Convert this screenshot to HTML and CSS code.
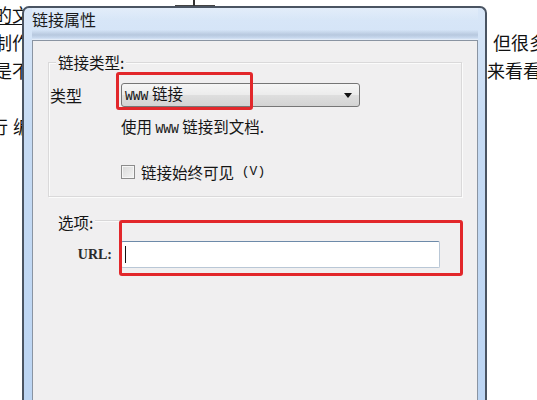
FILE: index.html
```html
<!DOCTYPE html>
<html lang="zh-CN">
<head>
<meta charset="utf-8">
<title>链接属性</title>
<link rel="stylesheet" href="styles.css">
</head>
<body>
<div class="doc">
  <div class="line"><span class="l u">的文</span></div>
  <div class="line"><span class="l">制作</span><span class="r r1">但很多</span></div>
  <div class="line"><span class="l">是不</span><span class="r r2">起来看看</span></div>
  <div class="line"></div>
  <div class="line"><span class="l5"><span class="gap">行</span>编</span></div>
</div>
<span class="caret-mark"></span>

<div class="dialog">
  <div class="titlebar"><span class="title">链接属性</span></div>
  <div class="client">
    <div class="group">
      <div class="legend">链接类型:</div>
      <div class="type-row">
        <span class="lbl">类型</span>
        <div class="select">
          <span class="sel-text"><span class="lat">WWW</span> 链接</span>
          <svg class="arrow" width="8" height="5" viewBox="0 0 8 5"><path d="M0 0H8L4 5Z" fill="#111"/></svg>
        </div>
      </div>
      <div class="desc">使用 <span class="lat">WWW</span> 链接到文档.</div>
      <div class="check"><span class="box"></span>链接始终可见<span class="lat"> (V)</span></div>
    </div>
    <div class="section"><span class="section-lbl">选项:</span><span class="rule"></span></div>
    <div class="url-row">
      <span class="url-lbl">URL:</span>
      <div class="input"><span class="cursor"></span></div>
    </div>
    <div class="mark mark1"></div>
    <div class="mark mark2"></div>
  </div>
</div>
</body>
</html>
```
FILE: styles.css
```css
html, body {
  margin: 0;
  padding: 0;
}
body {
  width: 537px;
  height: 400px;
  overflow: hidden;
  position: relative;
  background: #ffffff;
  font-family: "Noto Sans CJK SC", "Noto Sans", sans-serif;
  color: #141414;
}

/* background document */
.doc {
  font-size: 18px;
  line-height: 28px;
  color: #121212;
}
.line {
  display: flex;
  height: 28px;
  white-space: nowrap;
}
.l { margin-left: -6px; }
.l5 { margin-left: -10px; }
.gap { margin-right: 5px; }
.u { text-decoration: underline; text-underline-offset: 2px; }
.r { margin-left: auto; }
.r1 { margin-right: -10px; }
.r2 { margin-right: -4px; }

.caret-mark {
  position: absolute;
  left: 175px;
  top: 0;
  width: 40px;
  height: 5px;
  border-bottom: 1px solid #444;
}
.caret-mark::after {
  content: "";
  position: absolute;
  left: 18px;
  top: 0;
  width: 2px;
  height: 8px;
  background: #333;
}

/* dialog */
.dialog {
  position: absolute;
  left: 22px;
  top: 6px;
  width: 465px;
  height: 394px;
  box-sizing: border-box;
  border: 2px solid #4a5462;
  border-bottom: none;
  border-radius: 7px 7px 0 0;
  background: linear-gradient(180deg, #d9e7f8 0%, #c6dbf4 30%, #bcd5f3 100%);
  padding: 0 7px 0 8px;
  display: flex;
  flex-direction: column;
}
.titlebar {
  height: 32px;
  flex-shrink: 0;
  background: linear-gradient(180deg, rgba(255,255,255,0.25) 0%, rgba(255,255,255,0) 40%, rgba(255,255,255,0) 68%, rgba(115,135,165,0.3) 84%, rgba(150,170,200,0.18) 94%, rgba(255,255,255,0.55) 100%);
}
.title {
  display: block;
  font-size: 16px;
  line-height: 22px;
  color: #1b1b1b;
}
.client {
  flex: 1;
  position: relative;
  background: #f0eff0;
  border: 1px solid #8a94a2;
  border-bottom: none;
  font-size: 15.5px;
  line-height: 18px;
  color: #151515;
}
.lat {
  font-family: "Liberation Mono", monospace;
  font-size: 13px;
}

.group {
  box-sizing: border-box;
  width: 414px;
  margin: 21px 0 0 15px;
  border: 1px solid #dad9da;
  box-shadow: inset 1px 1px 0 #fbfbfb, 1px 1px 0 #fbfbfb;
  padding-bottom: 15px;
}
.legend {
  width: fit-content;
  margin: -10px 0 0 7px;
  padding: 0 2px;
  background: #f0eff0;
}
.type-row {
  display: flex;
  align-items: center;
  margin-top: 12px;
  height: 24px;
}
.lbl {
  box-sizing: border-box;
  width: 72px;
  padding-left: 1px;
  font-size: 16px;
}
.select {
  box-sizing: border-box;
  width: 239px;
  height: 24px;
  border: 1px solid #767676;
  border-radius: 3px;
  background: linear-gradient(180deg, #f6f6f6 0%, #ececec 48%, #dedede 52%, #d3d3d3 100%);
  display: flex;
  align-items: center;
  justify-content: space-between;
  padding: 0 7px 0 3px;
}
.sel-text {
  white-space: nowrap;
}
.arrow {
  display: block;
}
.desc {
  margin: 10px 0 0 72px;
  white-space: nowrap;
}
.check {
  display: flex;
  align-items: center;
  margin: 24px 0 0 72px;
  white-space: pre;
}
.box {
  box-sizing: border-box;
  width: 14px;
  height: 14px;
  margin-right: 6px;
  border: 1px solid #8c8c8c;
  background: linear-gradient(135deg, #d8d8d8 0%, #f4f4f4 100%);
  box-shadow: inset 0 0 0 1px #f6f6f6;
}

.section {
  display: flex;
  align-items: center;
  width: 404px;
  margin: 16px 0 0 25px;
}
.rule {
  flex: 1;
  height: 0;
  margin: -3px 0 0 2px;
  border-top: 1px solid #d8d7d8;
  box-shadow: 0 1px 0 #fafafa;
}
.url-row {
  display: flex;
  align-items: center;
  margin-top: 10px;
}
.url-lbl {
  box-sizing: border-box;
  width: 83px;
  padding-right: 4px;
  text-align: right;
  font-family: "Liberation Serif", serif;
  font-size: 14px;
  font-weight: bold;
  color: #2a2a2a;
}
.input {
  box-sizing: border-box;
  width: 319px;
  height: 27px;
  margin-left: 5px;
  background: #ffffff;
  border: 1px solid #b9c7d6;
  border-top-color: #6d8aa9;
  border-radius: 2px;
  display: flex;
  align-items: center;
  padding-left: 3px;
}
.cursor {
  width: 1px;
  height: 17px;
  background: #111;
}

.mark {
  position: absolute;
  box-sizing: border-box;
  border: 3px solid #e2272b;
  border-radius: 3px;
}
.mark1 {
  left: 83px;
  top: 31px;
  width: 137px;
  height: 38px;
}
.mark2 {
  left: 86px;
  top: 179px;
  width: 344px;
  height: 56px;
}
```
